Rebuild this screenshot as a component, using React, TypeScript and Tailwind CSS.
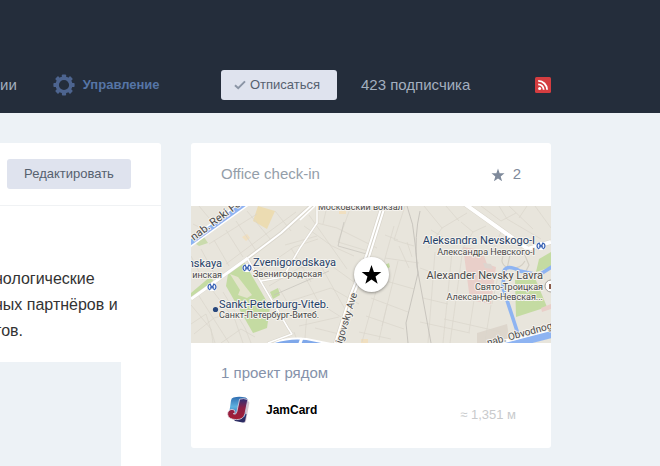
import { useState } from 'react';

const GEAR_ANGLES = [0, 45, 90, 135, 180, 225, 270, 315];
const STAR = 'M12 1l2.8 8 8.4.2-6.6 5.2 2.4 8.2-7-4.8-7 4.8 2.4-8.2L.8 9.2l8.4-.2z';

function GearIcon() {
  return (
    <svg viewBox="0 0 22 22" className="w-[22px] h-[22px] shrink-0" aria-hidden="true">
      <circle cx="11" cy="11" r="6.8" fill="none" stroke="#4d648f" strokeWidth="3.4" />
      {GEAR_ANGLES.map((angle) => (
        <rect key={angle} x="8.9" y="0.4" width="4.2" height="3.5" rx="0.8" fill="#4d648f" transform={`rotate(${angle} 11 11)`} />
      ))}
    </svg>
  );
}

function StarIcon({ className }: { className: string }) {
  return (
    <svg viewBox="0 0 24 24" fill="currentColor" className={className} aria-hidden="true">
      <path d={STAR} />
    </svg>
  );
}

function RssIcon() {
  return (
    <svg viewBox="0 0 16 16" className="w-4 h-4 block" aria-hidden="true">
      <rect width="16" height="16" rx="1.5" fill="#d43d40" />
      <circle cx="4.6" cy="11.4" r="1.5" fill="#fff" />
      <path d="M3.2 7.3a5.5 5.5 0 0 1 5.5 5.5M3.2 3.9a8.9 8.9 0 0 1 8.9 8.9" fill="none" stroke="#fff" strokeWidth="1.8" />
    </svg>
  );
}

function JamCardLogo() {
  return (
    <svg viewBox="0 0 24 28" className="w-6 h-7 shrink-0" aria-hidden="true">
      <defs>
        <linearGradient id="jam-blue" x1="0" y1="0" x2="0" y2="1">
          <stop offset="0" stopColor="#2f6cb0" />
          <stop offset="0.5" stopColor="#5fb2e0" />
          <stop offset="1" stopColor="#2b5fa4" />
        </linearGradient>
        <linearGradient id="jam-red" x1="0" y1="0" x2="0" y2="1">
          <stop offset="0" stopColor="#2a2f78" />
          <stop offset="0.45" stopColor="#8c1f45" />
          <stop offset="1" stopColor="#a51d33" />
        </linearGradient>
      </defs>
      <path d="M19 4l2.2 1.2q1.4.6 1.1 2L19 25q-.5 2.2-2.6 1.8z" fill="#d6c8d0" />
      <path d="M4 20l4 5 7.5 1.6q2 .2 2.6-1.6l1.4-7z" fill="#2c2c63" />
      <path d="M6.5 1.5Q12-.2 18.5 1.5q2.4.8 2 3.4L18 21H1.6L4 4.4q.3-2.3 2.5-2.9z" fill="url(#jam-blue)" />
      <path
        d="M12.6 3.2q3.9-1.4 8.2.4L18 17.6q-1.4 6-8.4 6-8.4 0-9-5.4.1-4.4 4.4-4.8 3.2.1 3.1 2.8-.3 1.6-1.8 1.5 2.6 1.6 3.5-1.6z"
        fill="url(#jam-red)"
        stroke="#e4d9e4"
        strokeWidth="0.8"
      />
    </svg>
  );
}

function MetroMark({ x, y }: { x: number; y: number }) {
  return (
    <g transform={`translate(${x} ${y})`} fill="none">
      <rect x="-4.8" y="-4" width="9.6" height="8" rx="3.4" fill="#fff" />
      <path d="M-1.9 3a3.2 3.2 0 0 1 0-6L0 1l1.9-4a3.2 3.2 0 0 1 0 6" stroke="#3a63b5" strokeWidth="1.3" />
      <path d="M-1.6 2.6v-3M1.6 2.6v-3" stroke="#3a63b5" strokeWidth="0.9" />
    </g>
  );
}

function CityMap() {
  return (
    <svg
      viewBox="0 0 360 137"
      preserveAspectRatio="xMidYMid slice"
      className="block w-full h-[137px] font-['Roboto',sans-serif]"
      role="img"
      aria-label="Office check-in"
    >
      <rect width="360" height="137" fill="#e8e5dc" />

      {/* parks and blocks */}
      <path d="M62 15l5-15 17 5-8 18z" fill="#ecdcb2" />
      <path d="M51 31l5-3 3 4-4 3z" fill="#f0dfc0" />
      <path d="M5 38l8-7 4 6-9 3z" fill="#cadbad" />
      <path d="M0 87l20-17 3 7L0 94z" fill="#c4dba2" />
      <path d="M37 68l16-12 26 45-3 21-14 5-27-47z" fill="#c4dba2" />
      <path d="M39 68l8 3 14 18-5 3-9-3 2-5z" fill="#e4e4cd" />
      <path d="M79 86l8-4 2 7-7 4z" fill="#c4dba2" />
      <path d="M194 59l4-2 1 4-3 2z" fill="#c4dba2" />
      <path d="M272 41l19 3 5 14 9 3-5 37-21-4z" fill="#e9cfc9" />
      <path d="M292 57l8 1 2 5-8-1z" fill="#ddd5cf" />
      <path d="M345 66l3-13 12-7v15z" fill="#c4dba2" />
      <path d="M324 74l20-2 12 29-31 10z" fill="#c4dba2" />
      <path d="M350 102l10-4v5l-9 3z" fill="#e9cfc9" />
      <path d="M286 127l30-9 3 19h-33z" fill="#ddd6cc" />
      <path d="M148 4h7v4h-7zM170 133h7v4h-7z" fill="#f0dfc0" />

      {/* minor streets */}
      <g fill="none" stroke="#dad6cb" strokeWidth="0.7">
        <path d="M10 43l14 26M23 34l15 26M35 24l17 27M45 15l21 31M56 5l24 29M84 5l16 20M0 50l12 24M8 0l10 12M2 18l12 6M18 38l48-30M35 58l40-30 30-22" />
        <path d="M0 99l20 24 2 14M8 90l30 47M18 80l26 34 8 23M32 86l22 36 6 15M0 118l15-10 9 29M3 128l20-16 14-4M30 137l20-14 14 8" />
        <path d="M67 66l36-25 24-8M78 80l30-18 30-4 36 26M90 98l50-16 28 16M88 82l18 31M112 67l16 30 22 14M130 60l25 45M100 42l20 34" />
        <path d="M126 17l20 5 40 20M136 0l-4 18M160 0l-13 36 33 10M113 20l28 20 22 10M118 9l38 54M126 30l-32 9M108 120l40-9M103 126l4 11M116 106l-2 26M124 122l24 6" />
        <path d="M194 52l34 5M188 73l35 10M180 92l37 14M175 110l38 13M168 126l32 7M203 20l-10 36-22 80M214 0l-11 34 20 6M194 29l13 5M208 40l10 22M216 36l5 15M207 55l-16 65M196 99l-8 35" />
        <path d="M233 0l18 22-14 20M251 22l25-15M255 0l13 15M270 16l12 10-10 16M282 26l13-6M298 16l12 10-8 18M308 0l8 13 34 20M318 0l24 23M336 0l-8 12M344 0l16 22M290 0l20 15 15-8M240 24l20 12" />
        <path d="M229 62l28 10M232 92l25 6M229 116l50 11M244 46l-7 91M261 46l-9 91M272 42l-13 95M283 94l-5 32M300 99l-6 36M307 70l-6 28M253 113l57 13" />
        <path d="M315 45q-9 12 2 17 12 2 17-7M320 44l-4 19M333 47l5 12-5 10" strokeWidth="1.2" stroke="#d3cfc4" />
      </g>

      {/* railways */}
      <g fill="none" stroke="#c4c1ba" strokeWidth="0.9">
        <path d="M216 0q7 18 8 37l3 30-12 50 2 20M229 5q-6 25-3 56l14 76" />
        <path d="M153 16l-6 24 32 9M83 89l55-24" strokeWidth="0.7" />
      </g>

      {/* water */}
      <g fill="none" strokeLinejoin="round">
        <path d="M-4 39L56-4" stroke="#fff" strokeWidth="8" />
        <path d="M-4 39L56-4" stroke="#8eb4f2" strokeWidth="5" />
        <path d="M84 138q16-5 31-3l30 6" stroke="#fff" strokeWidth="6" />
        <path d="M84 139q16-5 31-3l30 6" stroke="#7fa8ea" strokeWidth="4" />
        <path d="M362 60l-14 9-19-4q-13-7-16 0l-1 17 17 52" stroke="#8eb4f2" strokeWidth="3.6" />
        <path d="M278 148l84-22" stroke="#fff" strokeWidth="10" />
        <path d="M278 150l84-22" stroke="#8eb4f2" strokeWidth="7" />
      </g>

      {/* main roads */}
      <g fill="none" stroke="#d9d5cb" strokeLinejoin="round">
        <path d="M0 93l57-41L90 27l32-29" strokeWidth="3.8" />
        <path d="M56 52l41 70 4 6-24 9M92 71l17-29 17-25V0M70 75l22-4" strokeWidth="2.6" />
        <path d="M193-2l-16 51-16 40-16 50" strokeWidth="6.4" />
        <path d="M271-4l66 47 23-7" strokeWidth="5" />
      </g>
      <g fill="none" stroke="#fff" strokeLinejoin="round">
        <path d="M0 93l57-41" strokeWidth="3" />
        <path d="M57 52l33-25 32-29" strokeWidth="2" />
        <path d="M56 52l41 70 4 6-24 9M92 71l17-29 17-25V0M109 14l15-14M70 75l22-4" strokeWidth="1.5" />
        <path d="M193-2l-16 51-16 40-16 50" strokeWidth="5" />
        <path d="M271-4l66 47 23-7" strokeWidth="4" />
        <path d="M111 132l-3 8" strokeWidth="3" />
      </g>
      <path d="M193-2l-16 51-16 40-16 50" fill="none" stroke="#d3cfc5" strokeWidth="1" />

      <MetroMark x={56} y={62} />
      <MetroMark x={21} y={81} />
      <MetroMark x={350} y={40} />
      <circle cx="24.5" cy="103.5" r="2.6" fill="#27477d" />
      <circle cx="360" cy="80" r="6" fill="#fff" stroke="#a5a19b" strokeWidth="1" />
      <path d="M358 78h2v5h-2z" fill="#8a5a48" />

      {/* labels */}
      <g stroke="#f5f3ee" strokeWidth="2" strokeLinejoin="round" paintOrder="stroke" fontSize="9" fill="#4a4a4a">
        <text x="127" y="4">Московский вокзал</text>
        <text x="31" y="72" textAnchor="end">инская</text>
        <text x="62" y="71">Звенигородская</text>
        <text x="28" y="112">Санкт-Петербург-Витеб.</text>
        <text x="344" y="49" textAnchor="end">Александра Невского-I</text>
        <text x="352" y="84" textAnchor="end">Свято-Троицкая</text>
        <text x="352" y="94" textAnchor="end">Александро-Невская...</text>
        <text transform="translate(3 35) rotate(-37)" fontSize="11">nab. Reki Fontanki</text>
        <text transform="translate(151 138) rotate(-73)" fontSize="10">igovsky Ave</text>
        <text transform="translate(297 140) rotate(-15)" fontSize="10">nab. Obvodnogo</text>
        <g fontSize="11">
          <text x="352" y="73" textAnchor="end">Alexander Nevsky Lavra</text>
          <g fill="#1f4068">
            <text x="31" y="61" textAnchor="end">nskaya</text>
            <text x="62" y="60">Zvenigorodskaya</text>
            <text x="28" y="102">Sankt-Peterburg-Viteb.</text>
            <text x="344" y="38" textAnchor="end">Aleksandra Nevskogo-I</text>
          </g>
        </g>
      </g>
    </svg>
  );
}

function Header() {
  const [subscribed, setSubscribed] = useState(true);

  return (
    <header className="bg-[#242d3b] pt-[70px] pb-[13px]">
      <div className="flex items-center h-[30px] pr-[109px] whitespace-nowrap">
        <nav className="w-[221px] shrink-0 flex items-center gap-9">
          <a href="#about" className="text-[15px] text-[#a3afbf]">ии</a>
          <a href="#manage" className="flex items-center gap-2 text-[13px] font-bold text-[#5675a6]">
            <GearIcon />
            Управление
          </a>
        </nav>
        <button
          onClick={() => setSubscribed(!subscribed)}
          className="h-[30px] w-[116px] shrink-0 flex items-center justify-center gap-1 pr-1 rounded-[3px] bg-[#dfe3ee] text-[13px] text-[#56616f]"
        >
          {subscribed && (
            <svg viewBox="0 0 12 10" className="w-3 h-[10px]" aria-hidden="true">
              <path d="M1 5.2l3.2 3L11 1.4" fill="none" stroke="#8b95a5" strokeWidth="2" />
            </svg>
          )}
          Отписаться
        </button>
        <span className="ml-6 text-[15px] text-[#a3afbf]">423 подписчика</span>
        <a href="#rss" aria-label="RSS" className="ml-auto">
          <RssIcon />
        </a>
      </div>
    </header>
  );
}

function AboutCard() {
  return (
    <section className="w-[161px] shrink-0 overflow-hidden rounded-tr-[3px] bg-white">
      <div className="h-[63px] flex items-center justify-end pr-[30px] border-b border-[#f0f2f4]">
        <button className="h-[30px] w-[124px] rounded-[3px] bg-[#dfe3ee] text-[13px] text-[#56616f]">Редактировать</button>
      </div>
      <div className="pt-[60px] pr-10">
        <p className="-ml-[6px] text-base leading-[26px] whitespace-nowrap text-[#333]">
          нологические
          <br />
          ных партнёров и
          <br />
          тов.
        </p>
        <div className="mt-[18px] h-[120px] bg-[#edf2f6]" />
      </div>
    </section>
  );
}

function CheckinCard() {
  return (
    <section className="flex-1 self-start overflow-hidden rounded-[3px] bg-white">
      <div className="h-[63px] flex items-center justify-between px-[30px] text-[15px]">
        <h2 className="text-[#949ea9]">Office check-in</h2>
        <span className="flex items-center gap-2 text-[#7f8a9b]">
          <StarIcon className="w-[14px] h-[14px]" />
          2
        </span>
      </div>
      <div className="relative">
        <CityMap />
        <div className="absolute inset-0 flex items-center justify-center">
          <span className="w-[35px] h-[35px] flex items-center justify-center rounded-full bg-white shadow-[0_1px_3px_rgba(0,0,0,0.4)]">
            <StarIcon className="w-[21px] h-[21px] text-black" />
          </span>
        </div>
      </div>
      <div className="px-[30px] pt-5 pb-6">
        <h3 className="text-[15px] leading-5 text-[#8592aa]">1 проект рядом</h3>
        <div className="mt-[13px] pl-[6px] pr-[5px] flex items-center">
          <JamCardLogo />
          <a href="#jamcard" className="ml-[15px] text-xs font-bold text-black">JamCard</a>
          <span className="ml-auto self-end text-[13px] text-[#c8cacc]">≈ 1,351 м</span>
        </div>
      </div>
    </section>
  );
}

export default function App() {
  return (
    <div className="min-h-screen flex flex-col overflow-hidden bg-[#edf2f6] font-['Liberation_Sans',Arial,sans-serif]">
      <Header />
      <main className="flex-1 flex gap-[30px] pt-[30px] pr-[109px]">
        <AboutCard />
        <CheckinCard />
      </main>
    </div>
  );
}
